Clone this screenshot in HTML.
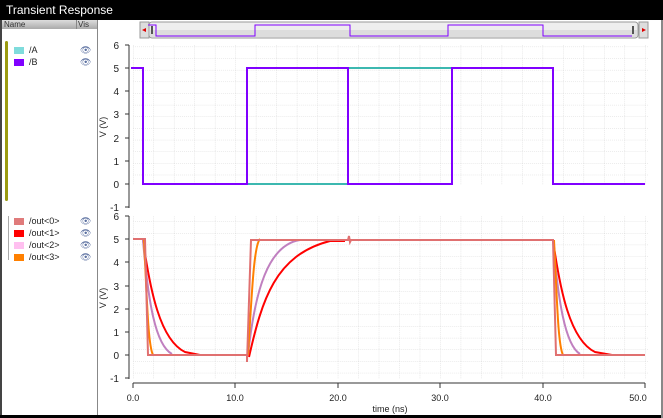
<!DOCTYPE html>
<html><head><meta charset="utf-8"><style>
body{margin:0;width:663px;height:418px;overflow:hidden;background:#fff;font-family:"Liberation Sans",sans-serif;position:relative}
.title{position:absolute;left:0;top:0;width:663px;height:20px;background:#000;color:#fff;font-size:12px;line-height:20px;padding-left:6px;box-sizing:border-box}
.hdr{position:absolute;left:2px;top:20px;width:95px;height:9px;background:linear-gradient(#ddd,#aaa);font-size:8px;color:#333;line-height:9px}
.it{position:absolute;left:14px;font-size:9px;color:#222;height:10px;line-height:10px}
.sw{display:inline-block;width:10px;height:7px;vertical-align:middle;margin-right:5px}
.eye{position:absolute;left:80px;font-size:9px;color:#5a6fa0}
</style></head><body>
<div class="title">Transient Response</div>
<div class="hdr"><span style="position:absolute;left:2px">Name</span><span style="position:absolute;left:76px">Vis</span><span style="position:absolute;left:74px;top:0;width:1px;height:9px;background:#888"></span></div>
<div style="position:absolute;left:97px;top:20px;width:1px;height:396px;background:#888"></div>
<div style="position:absolute;left:0;top:20px;width:2px;height:396px;background:#444"></div>
<div style="position:absolute;left:5px;top:41px;width:3px;height:160px;background:#9a9a10;border-radius:2px"></div>
<div style="position:absolute;left:8px;top:216px;width:1px;height:44px;background:#aaa"></div>
<div class="it" style="top:45px"><span class="sw" style="background:#7fdcdc"></span>/A</div><div class="eye" style="top:45px">👁</div>
<div class="it" style="top:57px"><span class="sw" style="background:#8000ff"></span>/B</div><div class="eye" style="top:57px">👁</div>
<div class="it" style="top:216px"><span class="sw" style="background:#e07b7b"></span>/out&lt;0&gt;</div><div class="eye" style="top:216px">👁</div>
<div class="it" style="top:228px"><span class="sw" style="background:#ff0000"></span>/out&lt;1&gt;</div><div class="eye" style="top:228px">👁</div>
<div class="it" style="top:240px"><span class="sw" style="background:#ffc0f0"></span>/out&lt;2&gt;</div><div class="eye" style="top:240px">👁</div>
<div class="it" style="top:252px"><span class="sw" style="background:#ff8000"></span>/out&lt;3&gt;</div><div class="eye" style="top:252px">👁</div>
<div style="position:absolute;left:0;top:415px;width:663px;height:3px;background:#000"></div>
<div style="position:absolute;left:661px;top:20px;width:2px;height:398px;background:#888"></div>
<svg style="position:absolute;left:0;top:0" width="663" height="418" font-family="Liberation Sans,sans-serif" font-size="10">
<defs><pattern id="g" x="133" y="0" width="20.48" height="11.65" patternUnits="userSpaceOnUse"><path d="M0 0V11.65M0 0H20.48" stroke="#d8d8d8" stroke-width="1" stroke-dasharray="1 1" fill="none"/></pattern></defs>
<!-- scrollbar -->
<rect x="140" y="22" width="9" height="16" fill="#ddd" stroke="#999"/><path d="M142 30l4-2v4z" fill="#d00"/>
<rect x="149" y="22" width="489" height="16" rx="3" fill="#eee" stroke="#999"/>
<rect x="150" y="30" width="487" height="7" fill="#ddd"/>
<path d="M148 25H156V36H255V25H350V36H448V25H543V36H632" stroke="#8000ff" fill="none"/>
<rect x="151" y="26" width="2" height="8" fill="#555"/><rect x="632" y="26" width="2" height="8" fill="#555"/>
<rect x="639" y="22" width="9" height="16" fill="#ddd" stroke="#999"/><path d="M646 30l-4-2v4z" fill="#d00"/>
<!-- grids -->
<rect x="133" y="45" width="515" height="140" fill="url(#g)"/>
<rect x="133" y="216" width="515" height="163" fill="url(#g)"/>
<!-- axes -->
<g stroke="#333" fill="none">
<path d="M129 45V208M125 45h4M125 68h4M125 91h4M125 114h4M125 138h4M125 161h4M125 184h4M125 207h4"/>
<path d="M129 216V379M125 216h4M125 239h4M125 262h4M125 286h4M125 309h4M125 332h4M125 355h4M125 378h4"/>
<path d="M133 383H645M133 383v5M235 383v5M338 383v5M440 383v5M543 383v5M645 383v5"/>
</g>
<g fill="#222" text-anchor="end">
<text x="119" y="49">6</text><text x="119" y="72">5</text><text x="119" y="95">4</text><text x="119" y="118">3</text><text x="119" y="142">2</text><text x="119" y="165">1</text><text x="119" y="188">0</text><text x="119" y="211">-1</text>
<text x="119" y="220">6</text><text x="119" y="243">5</text><text x="119" y="266">4</text><text x="119" y="290">3</text><text x="119" y="313">2</text><text x="119" y="336">1</text><text x="119" y="359">0</text><text x="119" y="382">-1</text>
</g>
<g fill="#222" text-anchor="middle" font-size="9">
<text x="133" y="401">0.0</text><text x="235" y="401">10.0</text><text x="338" y="401">20.0</text><text x="440" y="401">30.0</text><text x="543" y="401">40.0</text><text x="638" y="401">50.0</text>
<text x="390" y="412">time (ns)</text>
</g>
<text transform="translate(106,127) rotate(-90)" text-anchor="middle" font-size="9" fill="#222">V (V)</text>
<text transform="translate(106,298) rotate(-90)" text-anchor="middle" font-size="9" fill="#222">V (V)</text>
<!-- top waveforms -->
<path d="M131 68H143V184H348V68H553V184H645" stroke="#3cb8b0" stroke-width="2" fill="none"/>
<path d="M131 68H143V184H247V68H348V184H452V68H553V184H645" stroke="#8000ff" stroke-width="2" fill="none"/>
<!-- bottom waveforms -->
<g fill="none" stroke-width="2">
<path d="M249 357C262 300 275 255 330 241H345" stroke="#ff0000"/>
<path d="M143 240C150 290 160 340 185 352L200 355" stroke="#ff0000"/>
<path d="M553 240C560 290 570 340 595 352L612 355" stroke="#ff0000"/>
<path d="M248 355C255 290 268 245 300 240" stroke="#c080c0"/>
<path d="M143 240C148 300 155 345 172 354" stroke="#c080c0"/>
<path d="M553 240C558 300 565 345 580 354" stroke="#c080c0"/>
<path d="M248 355C252 290 254 245 260 239" stroke="#ff8000"/>
<path d="M144 240C147 300 148 345 153 355" stroke="#ff8000"/>
<path d="M554 240C557 300 558 345 563 355" stroke="#ff8000"/>
<path d="M133 239H145L148 355H247L247 362L251 240H348l1-4 1 6 1-2H553L556 355H645" stroke="#e07070"/>
</g>
</svg>
</body></html>
